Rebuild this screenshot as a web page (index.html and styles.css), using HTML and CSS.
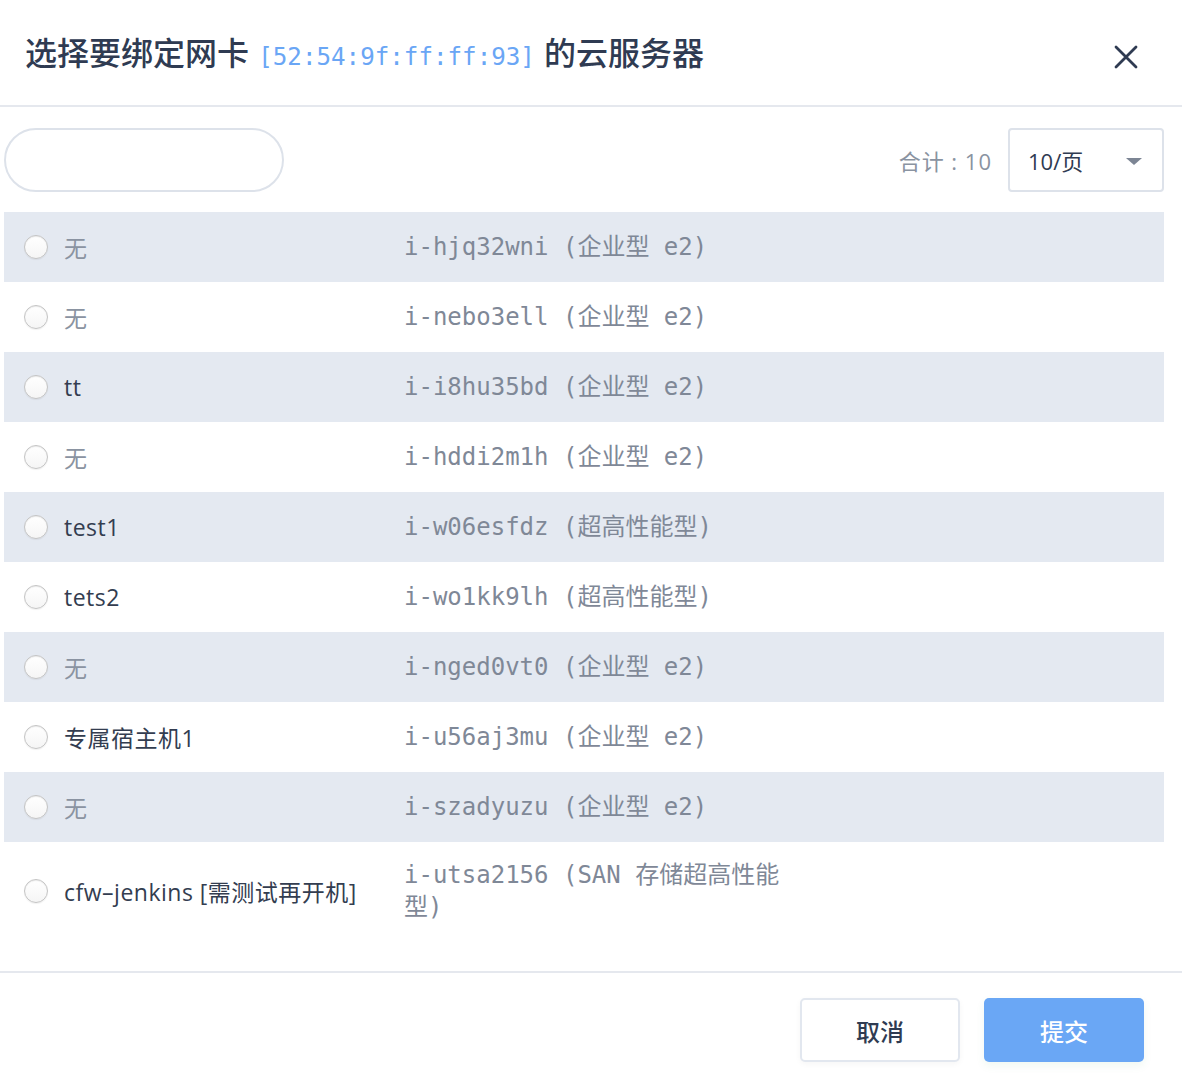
FILE: index.html
```html
<!DOCTYPE html>
<html lang="zh-CN">
<head>
<meta charset="utf-8">
<link rel="stylesheet" href="styles.css">
</head>
<body>
<div class="dialog">
  <header class="dlg-head">
    <h1 class="title">选择要绑定网卡 <span class="mac">[52:54:9f:ff:ff:93]</span> 的云服务器</h1>
    <button class="close" aria-label="关闭">
      <svg width="24" height="24" viewBox="0 0 24 24"><path d="M2 2 L22 22 M22 2 L2 22" stroke="#2f3b52" stroke-width="2.8" stroke-linecap="round"/></svg>
    </button>
  </header>
  <div class="body">
    <div class="toolbar">
      <input class="search" type="text">
      <div class="tools-right">
        <span class="total">合计 : 10</span>
        <div class="select"><span>10/页</span><i class="caret"></i></div>
      </div>
    </div>
    <ul class="list">
      <li class="row alt"><div class="c1"><span class="radio"></span><span class="name none">无</span></div><div class="c2">i-hjq32wni (企业型 e2)</div></li>
      <li class="row"><div class="c1"><span class="radio"></span><span class="name none">无</span></div><div class="c2">i-nebo3ell (企业型 e2)</div></li>
      <li class="row alt"><div class="c1"><span class="radio"></span><span class="name">tt</span></div><div class="c2">i-i8hu35bd (企业型 e2)</div></li>
      <li class="row"><div class="c1"><span class="radio"></span><span class="name none">无</span></div><div class="c2">i-hddi2m1h (企业型 e2)</div></li>
      <li class="row alt"><div class="c1"><span class="radio"></span><span class="name">test1</span></div><div class="c2">i-w06esfdz (超高性能型)</div></li>
      <li class="row"><div class="c1"><span class="radio"></span><span class="name">tets2</span></div><div class="c2">i-wo1kk9lh (超高性能型)</div></li>
      <li class="row alt"><div class="c1"><span class="radio"></span><span class="name none">无</span></div><div class="c2">i-nged0vt0 (企业型 e2)</div></li>
      <li class="row"><div class="c1"><span class="radio"></span><span class="name">专属宿主机1</span></div><div class="c2">i-u56aj3mu (企业型 e2)</div></li>
      <li class="row alt"><div class="c1"><span class="radio"></span><span class="name none">无</span></div><div class="c2">i-szadyuzu (企业型 e2)</div></li>
      <li class="row tall"><div class="c1"><span class="radio"></span><span class="name">cfw–jenkins [需测试再开机]</span></div><div class="c2">i-utsa2156 (SAN 存储超高性能型)</div></li>
    </ul>
  </div>
  <footer class="dlg-foot">
    <button class="btn cancel">取消</button>
    <button class="btn primary">提交</button>
  </footer>
</div>
</body>
</html>
```

FILE: styles.css
```css
* { box-sizing: border-box; }
html, body { margin: 0; padding: 0; background: #fff; }
body {
  font-family: "Open Sans", "Noto Sans CJK SC", sans-serif;
  color: #2f3b52;
}
ul { list-style: none; margin: 0; padding: 0; }

.dialog { width: 1182px; }

.dlg-head {
  height: 107px;
  border-bottom: 2px solid #e5e8ee;
  display: flex;
  align-items: center;
  justify-content: space-between;
  padding: 0 44px 0 25px;
}
.title {
  margin: 0;
  font-size: 32px;
  font-weight: 500;
  font-family: "Noto Sans CJK SC", sans-serif;
  color: #2f3b52;
  word-spacing: 2px;
  position: relative;
  top: -2px;
}
.mac {
  font-family: "DejaVu Sans Mono", monospace;
  font-weight: normal;
  font-size: 24.2px;
  color: #6aa6f5;
}
.close {
  border: 0; background: none; padding: 0; margin: 0;
  width: 24px; height: 24px;
  display: flex;
  position: relative; top: 4px;
}

.body { padding: 21px 18px 0 4px; }

.toolbar {
  display: flex;
  align-items: center;
  justify-content: space-between;
  height: 64px;
}
.search {
  width: 280px;
  height: 64px;
  border: 2px solid #dde2ea;
  border-radius: 32px;
  background: #fff;
  outline: none;
}
.tools-right { display: flex; align-items: center; gap: 16px; }
.total {
  font-size: 22px;
  letter-spacing: 1px;
  color: #8a93a1;
}
.select {
  width: 156px;
  height: 64px;
  border: 2px solid #dde2ea;
  border-radius: 4px;
  display: flex;
  align-items: center;
  justify-content: space-between;
  padding: 0 20px 0 18px;
  font-size: 22px;
  color: #2f3b52;
}
.caret {
  width: 0; height: 0;
  border-left: 8px solid transparent;
  border-right: 8px solid transparent;
  border-top: 7px solid #7c8594;
  margin-top: 3px;
}

.list { margin-top: 20px; }
.row {
  height: 70px;
  display: flex;
  align-items: center;
}
.row.alt { background: #e4e9f1; }
.row.tall { height: 98px; }
.c1 {
  width: 400px;
  display: flex;
  align-items: center;
  padding-left: 20px;
  gap: 16px;
}
.radio {
  width: 24px; height: 24px;
  border-radius: 50%;
  border: 1px solid #c4c4c4;
  background: linear-gradient(#ffffff, #f5f5f5);
  box-shadow: inset 0 1px 1px rgba(0,0,0,0.08), 0 1px 1px rgba(0,0,0,0.06);
  flex: none;
}
.name {
  font-size: 23px;
  letter-spacing: 0.5px;
  color: #333d50;
}
.name.none { color: #8a93a1; }
.c2 {
  width: 392px;
  font-family: "DejaVu Sans Mono", "Noto Sans CJK SC", monospace;
  font-size: 24px;
  line-height: 32px;
  color: #7f8897;
}

.dlg-foot {
  margin-top: 31px;
  border-top: 2px solid #e5e8ee;
  display: flex;
  justify-content: flex-end;
  gap: 24px;
  padding: 25px 38px 14px 0;
}
.btn {
  width: 160px;
  height: 64px;
  border-radius: 5px;
  font-family: "Noto Sans CJK SC", sans-serif;
  font-size: 24px;
  font-weight: 500;
  cursor: pointer;
}
.cancel {
  background: #fff;
  border: 2px solid #e2e7ef;
  color: #2f3b52;
  box-shadow: 0 2px 6px rgba(0,0,0,0.04);
}
.primary {
  background: #6aa7f5;
  border: 0;
  color: #fff;
  box-shadow: 0 4px 8px rgba(60,160,90,0.08);
}
```
